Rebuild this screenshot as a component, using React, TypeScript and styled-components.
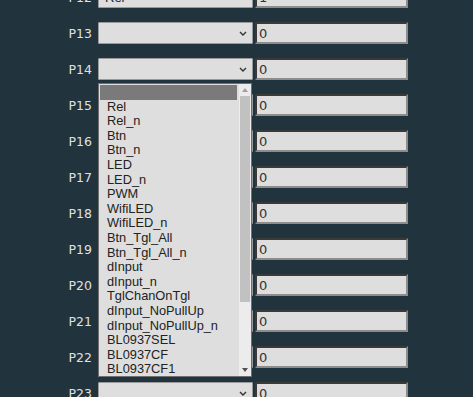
import React from 'react';
import styled, { createGlobalStyle } from 'styled-components';

const GlobalStyle = createGlobalStyle`
  html, body {
    margin: 0;
    padding: 0;
    background: #21333d;
    overflow: hidden;
  }
`;

const Page = styled.div`
  width: 473px;
  height: 397px;
  overflow: hidden;
  background: #21333d;
`;

const Rows = styled.div`
  display: flex;
  flex-direction: column;
  gap: 14px;
  margin-top: -14px;
`;

const Row = styled.div<{ $open?: boolean }>`
  position: relative;
  display: flex;
  align-items: center;
  height: 22px;
  z-index: ${(p) => (p.$open ? 5 : 1)};
`;

const Label = styled.div`
  width: 98px;
  padding-right: 6px;
  box-sizing: border-box;
  text-align: right;
  flex: none;
  color: #e0e0e0;
  font-family: 'DejaVu Sans', sans-serif;
  font-size: 12.5px;
`;

const SelectBox = styled.div`
  position: relative;
  width: 155px;
  height: 22px;
  box-sizing: border-box;
  background: #dedede;
  border: 1px solid #9a9a9a;
  border-radius: 1px;
  margin-right: 2px;
  font-family: 'Liberation Sans', Arial, sans-serif;
  font-size: 13px;
  color: #222;
  display: flex;
  align-items: center;
  padding-left: 6px;
`;

const Chevron = styled.svg`
  position: absolute;
  right: 5px;
  top: 8px;
`;

const Field = styled.div`
  width: 153px;
  height: 22px;
  box-sizing: border-box;
  background: #dedede;
  border-style: solid;
  border-width: 2px;
  border-color: #3a3a3a #8c8c8c #8c8c8c #3a3a3a;
  font-family: 'DejaVu Sans', sans-serif;
  font-size: 13px;
  color: #333;
  display: flex;
  align-items: center;
  padding-left: 2px;
`;

const Popup = styled.div`
  position: absolute;
  left: 98px;
  top: 25px;
  width: 154px;
  height: 294px;
  box-sizing: border-box;
  background: #dedede;
  border: 1px solid #6f6f6f;
  display: flex;
  overflow: hidden;
`;

const Options = styled.div`
  flex: 1;
  padding-top: 1px;
  display: flex;
  flex-direction: column;
`;

const Option = styled.div<{ $active?: boolean }>`
  height: 14.6px;
  line-height: 14.6px;
  padding-left: 7px;
  font-family: 'Liberation Sans', Arial, sans-serif;
  font-size: 12.8px;
  color: #222;
  background: ${(p) => (p.$active ? '#7a7a7a' : 'transparent')};
  margin-right: 2px;
  margin-left: 1px;
  white-space: nowrap;
`;

const Scrollbar = styled.div`
  width: 12px;
  flex: none;
  background: #ececec;
  display: flex;
  flex-direction: column;
  align-items: center;
`;

const ScrollArrow = styled.div`
  height: 12px;
  display: flex;
  align-items: center;
  justify-content: center;
`;

const Thumb = styled.div`
  width: 10px;
  height: 206px;
  background: #c1c1c1;
`;

const Spacer = styled.div`
  flex: 1;
`;

const options = [
  '',
  'Rel',
  'Rel_n',
  'Btn',
  'Btn_n',
  'LED',
  'LED_n',
  'PWM',
  'WifiLED',
  'WifiLED_n',
  'Btn_Tgl_All',
  'Btn_Tgl_All_n',
  'dInput',
  'dInput_n',
  'TglChanOnTgl',
  'dInput_NoPullUp',
  'dInput_NoPullUp_n',
  'BL0937SEL',
  'BL0937CF',
  'BL0937CF1',
];

const pins = [
  { name: 'P12', role: 'Rel', value: '1' },
  { name: 'P13', role: '', value: '0' },
  { name: 'P14', role: '', value: '0', open: true },
  { name: 'P15', role: '', value: '0' },
  { name: 'P16', role: '', value: '0' },
  { name: 'P17', role: '', value: '0' },
  { name: 'P18', role: '', value: '0' },
  { name: 'P19', role: '', value: '0' },
  { name: 'P20', role: '', value: '0' },
  { name: 'P21', role: '', value: '0' },
  { name: 'P22', role: '', value: '0' },
  { name: 'P23', role: '', value: '0' },
];

const ChevronIcon = () => (
  <Chevron width="8" height="5" viewBox="0 0 8 5">
    <path d="M1 1 L4 4 L7 1" stroke="#333" strokeWidth="1.4" fill="none" />
  </Chevron>
);

const App: React.FC = () => {
  return (
    <Page>
      <GlobalStyle />
      <Rows>
        {pins.map((pin) => (
          <Row key={pin.name} $open={pin.open}>
            <Label>{pin.name}</Label>
            <SelectBox>
              {pin.role}
              <ChevronIcon />
            </SelectBox>
            <Field>{pin.value}</Field>
            {pin.open && (
              <Popup>
                <Options>
                  {options.map((o, i) => (
                    <Option key={i} $active={i === 0}>
                      {o || '\u00a0'}
                    </Option>
                  ))}
                </Options>
                <Scrollbar>
                  <ScrollArrow>
                    <svg width="6" height="4" viewBox="0 0 6 4">
                      <path d="M0 4 L3 0 L6 4 Z" fill="#a0a0a0" />
                    </svg>
                  </ScrollArrow>
                  <Thumb />
                  <Spacer />
                  <ScrollArrow>
                    <svg width="6" height="4" viewBox="0 0 6 4">
                      <path d="M0 0 L3 4 L6 0 Z" fill="#505050" />
                    </svg>
                  </ScrollArrow>
                </Scrollbar>
              </Popup>
            )}
          </Row>
        ))}
      </Rows>
    </Page>
  );
};

export default App;
